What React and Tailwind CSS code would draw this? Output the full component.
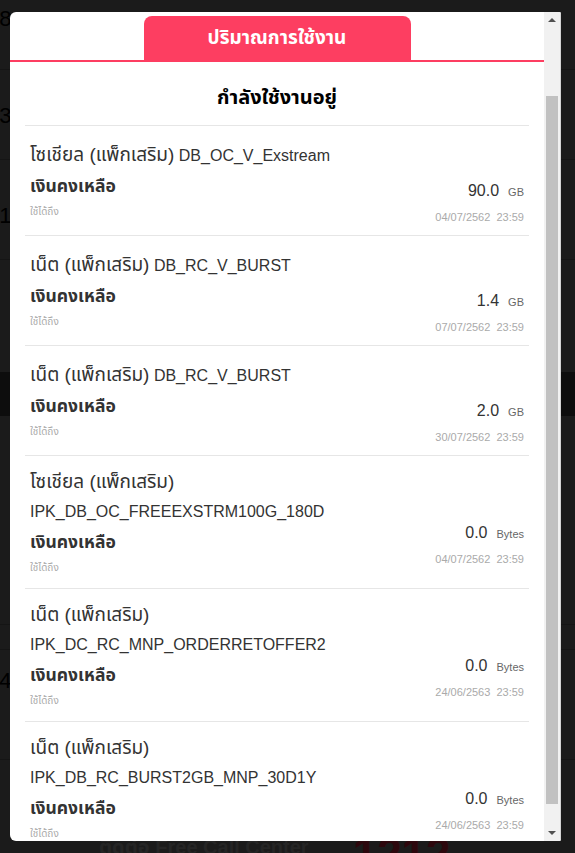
import React from 'react';

const packages = [
  { type: 'โซเชียล', code: 'DB_OC_V_Exstream', amount: '90.0', unit: 'GB', expire: '04/07/2562  23:59' },
  { type: 'เน็ต', code: 'DB_RC_V_BURST', amount: '1.4', unit: 'GB', expire: '07/07/2562  23:59' },
  { type: 'เน็ต', code: 'DB_RC_V_BURST', amount: '2.0', unit: 'GB', expire: '30/07/2562  23:59' },
  { type: 'โซเชียล', code: 'IPK_DB_OC_FREEEXSTRM100G_180D', amount: '0.0', unit: 'Bytes', expire: '04/07/2562  23:59' },
  { type: 'เน็ต', code: 'IPK_DC_RC_MNP_ORDERRETOFFER2', amount: '0.0', unit: 'Bytes', expire: '24/06/2563  23:59' },
  { type: 'เน็ต', code: 'IPK_DB_RC_BURST2GB_MNP_30D1Y', amount: '0.0', unit: 'Bytes', expire: '24/06/2563  23:59' },
];

const Arrow = ({ down }) => (
  <svg width="8" height="4" viewBox="0 0 8 4" className={down ? 'rotate-180' : ''}>
    <path d="M0 4 L4 0 L8 4 Z" fill="#505050" />
  </svg>
);

const PageRow = ({ num, className }) => (
  <div className={`flex flex-col border-b border-[#2a2a2a] -ml-[13px] ${className}`}>
    <span className="text-[22px] leading-[26px] text-black">{num}</span>
    <span className="text-[14px] leading-[18px] text-black">ก.</span>
  </div>
);

const PackageItem = ({ item }) => (
  <div className="flex items-center border-b border-[#e6e6e6] pl-[5px] pr-[5px] pt-[11px] pb-[11px]">
    <div className="flex-1 min-w-0">
      <div className="leading-[29px] text-[#333]">
        <span className="text-[19px]">{item.type} (แพ็กเสริม)</span>{' '}
        <span className="text-[16px]">{item.code}</span>
      </div>
      <div className="text-[17.5px] leading-[33px] font-bold text-[#333]">เงินคงเหลือ</div>
      <div className="text-[10px] leading-[18px] text-[#aaa]">ใช้ได้ถึง</div>
    </div>
    <div className="mt-[43px] flex w-[100px] shrink-0 flex-col items-end">
      <div className="leading-[22px] text-[#333] whitespace-nowrap">
        <span className="text-[16px]">{item.amount}</span>
        <span className="ml-[9px] text-[11px] text-[#666]">{item.unit}</span>
      </div>
      <div className="mt-[8px] text-[11px] leading-[13px] text-[#aaa] whitespace-pre">{item.expire}</div>
    </div>
  </div>
);

export default function App() {
  return (
    <div className="relative h-[853px] w-[575px] overflow-hidden bg-[#363636] font-['Liberation_Sans','Noto_Sans_Thai',sans-serif]">
      {/* page behind the dialog */}
      <div className="flex flex-col">
        <PageRow num="28" className="h-[70px] pt-[6px]" />
        <PageRow num="33" className="h-[90px] pt-[33px]" />
        <PageRow num="31" className="h-[100px] pt-[43px]" />
        <div className="h-[112px]" />
        <div className="h-[44px] bg-[#1a1a1a]" />
        <div className="h-[209px] border-b border-[#2a2a2a]" />
        <div className="h-[25px] border-b border-[#2a2a2a]" />
        <PageRow num="54" className="h-[110px] pt-[18px]" />
        <div className="h-[72px]" />
        <div className="flex items-start gap-[44px] pl-[99px]">
          <span className="text-[20px] leading-[30px] font-bold text-[#4a4a4a]">ติดต่อ Free Call Center</span>
          <span className="text-[44px] leading-[44px] font-bold text-[#5a0f1a]">1212</span>
        </div>
      </div>

      {/* overlay + dialog */}
      <div className="absolute inset-0 bg-black/50 pl-[10px] pt-[12px]">
        <div className="flex h-[829px] w-[551px] overflow-hidden rounded-l-[6px] rounded-r-[2px] bg-white">
          <div className="flex min-w-0 flex-1 flex-col overflow-hidden">
            <div className="flex justify-center border-b-2 border-[#fd3e61] pt-[4px]">
              <div className="flex h-[44px] w-[267px] items-center justify-center rounded-t-[8px] bg-[#fd3e61] text-[19px] font-bold text-white">
                ปริมาณการใช้งาน
              </div>
            </div>

            <div className="px-[15px]">
              <div className="h-[64px] border-b border-[#e6e6e6] pt-[20px] text-center text-[20px] font-bold leading-[30px] text-black">
                กำลังใช้งานอยู่
              </div>
              {packages.map((item, i) => (
                <PackageItem key={i} item={item} />
              ))}
            </div>
          </div>

          {/* scrollbar */}
          <div className="flex w-[17px] shrink-0 flex-col border-r border-[#d4d4d4] bg-[#f1f1f1]">
            <div className="flex h-[16px] items-center justify-center">
              <Arrow />
            </div>
            <div className="flex-1 px-[2px]">
              <div className="mt-[68px] h-[708px] bg-[#c1c1c1]" />
            </div>
            <div className="flex h-[16px] items-center justify-center">
              <Arrow down />
            </div>
          </div>
        </div>
      </div>
    </div>
  );
}
